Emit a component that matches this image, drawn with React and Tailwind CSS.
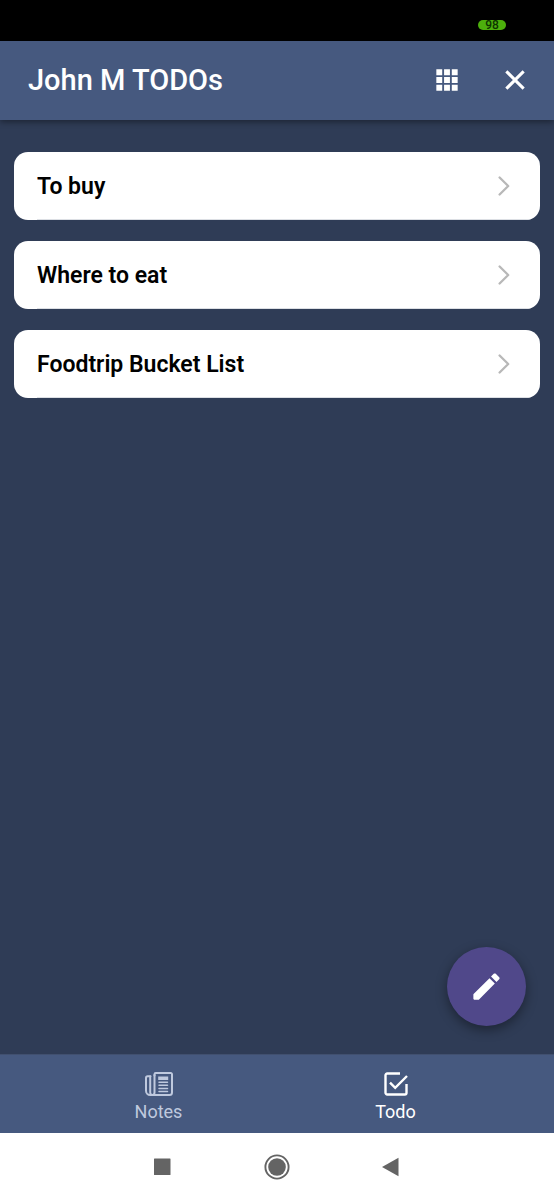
import React, { useState } from 'react';

const lists = ['To buy', 'Where to eat', 'Foodtrip Bucket List'];

function AppsIcon() {
  return (
    <svg viewBox="0 0 24 24" className="w-8 h-8" fill="currentColor" aria-hidden="true">
      <path d="M4 4h4.4v4.4H4zM9.8 4h4.4v4.4H9.8zM15.6 4H20v4.4h-4.4zM4 9.8h4.4v4.4H4zM9.8 9.8h4.4v4.4H9.8zM15.6 9.8H20v4.4h-4.4zM4 15.6h4.4V20H4zM9.8 15.6h4.4V20H9.8zM15.6 15.6H20V20h-4.4z" />
    </svg>
  );
}

function CloseIcon() {
  return (
    <svg viewBox="0 0 24 24" className="w-8 h-8" fill="currentColor" aria-hidden="true">
      <path d="M19.3 6.3L17.7 4.7 12 10.4 6.3 4.7 4.7 6.3 10.4 12l-5.7 5.7 1.6 1.6 5.7-5.7 5.7 5.7 1.6-1.6L13.6 12z" />
    </svg>
  );
}

function ChevronIcon() {
  return (
    <svg viewBox="0 0 12 20" className="w-3 h-5 text-[#b8b8b8]" fill="none" stroke="currentColor" strokeWidth="2.3" strokeLinecap="round" strokeLinejoin="round" aria-hidden="true">
      <path d="M1.6 1.5l8.6 8.5-8.6 8.5" />
    </svg>
  );
}

function PencilIcon() {
  return (
    <svg viewBox="0 0 512 512" className="w-[35px] h-[35px]" fill="currentColor" aria-hidden="true">
      <path d="M64 372v64c0 7 5 12 12 12h64q4 0 7-3L378 212l-78-78L67 365q-3 3-3 7zM441.6 150.4c8.5-8.5 8.5-21.3 0-29.9l-50.1-50.1c-8.5-8.5-21.3-8.5-29.9 0l-39.5 39.5 80 80 39.5-39.5z" />
    </svg>
  );
}

function NewspaperIcon() {
  return (
    <svg viewBox="0 0 28 24" className="w-7 h-6" fill="none" stroke="currentColor" strokeWidth="2" strokeLinecap="round" strokeLinejoin="round" aria-hidden="true">
      <path d="M9.5 3.5V2.2A1.2 1.2 0 0 1 10.7 1h15.1A1.2 1.2 0 0 1 27 2.2v18.3a2.5 2.5 0 0 1-2.5 2.5H5.2A4.2 4.2 0 0 1 1 18.8V6a1.7 1.7 0 0 1 1.7-1.7h2.8" />
      <path d="M9.5 3v17.5A2.5 2.5 0 0 1 7 23a2.5 2.5 0 0 1-1.8-2.5V4.5" />
      <path d="M14 10.2h8.5M14 13.3h8.500M14 16.400h8.500M14 19.400h8.500" strokeWidth="1.500" />
      <path d="M13.200 4.500h10v3.500h-10z" fill="currentColor" stroke="none" />
    </svg>
  );
}

function CheckboxIcon() {
  return (
    <svg viewBox="0 0 24 24" className="w-6 h-6" fill="none" stroke="currentColor" strokeWidth="2.4" strokeLinejoin="round" aria-hidden="true">
      <path d="M16 1.5H3.2A1.7 1.7 0 0 0 1.5 3.2v17.6a1.7 1.7 0 0 0 1.7 1.7h17.6a1.7 1.7 0 0 0 1.7-1.7V12" />
      <path d="M6 10.7l5.2 5.2L23 4" strokeLinejoin="miter" />
    </svg>
  );
}

const tabs = [
  { id: 'notes', label: 'Notes', Icon: NewspaperIcon },
  { id: 'todo', label: 'Todo', Icon: CheckboxIcon },
];

export default function App() {
  const [activeTab, setActiveTab] = useState('todo');

  return (
    <div className="min-h-screen flex flex-col bg-[#2f3c56] font-['Roboto',sans-serif]">
      <div className="h-[41px] shrink-0 bg-black flex justify-end items-center pt-2 pr-12">
        <span className="w-7 h-[10px] rounded-full bg-[#4caf0c] text-[#0b3300] text-[12px] leading-[10px] font-medium text-center">98</span>
      </div>

      <header className="relative h-[79px] shrink-0 bg-[#46597f] text-white flex items-center justify-between pl-7 pr-[23px] pb-px shadow-[0_2px_6px_rgba(0,0,0,0.4)]">
        <h1 className="text-[29px] leading-9 font-medium">John M TODOs</h1>
        <div className="flex items-center gap-9">
          <button type="button" aria-label="Apps"><AppsIcon /></button>
          <button type="button" aria-label="Close"><CloseIcon /></button>
        </div>
      </header>

      <main className="flex-1 flex flex-col px-[14px] pt-8">
        <ul className="flex flex-col gap-[21px]">
          {lists.map((name) => (
            <li key={name}>
              <button type="button" className="w-full h-[68px] bg-white rounded-[14px] pl-[23px] flex text-left overflow-hidden">
                <span className="flex-1 h-full flex items-center justify-between pr-[30px] border-b border-[#dcdfe4]">
                  <span className="pt-0.5 text-[23px] leading-8 font-semibold text-black">{name}</span>
                  <ChevronIcon />
                </span>
              </button>
            </li>
          ))}
        </ul>
        <button type="button" aria-label="New list" className="mt-auto mb-7 mr-[14px] self-end w-[79px] h-[79px] rounded-full bg-[#50488a] text-white flex items-center justify-center shadow-[0_4px_12px_rgba(0,0,0,0.4)]">
          <PencilIcon />
        </button>
      </main>

      <nav className="h-[79px] shrink-0 bg-[#46597f] border-t border-[#41506f] flex px-10">
        {tabs.map(({ id, label, Icon }) => (
          <button
            key={id}
            type="button"
            onClick={() => setActiveTab(id)}
            className={`flex-1 flex flex-col items-center justify-center gap-1 pt-2 ${activeTab === id ? 'text-white' : 'text-[#bfc9de]'}`}
          >
            <Icon />
            <span className="text-[18px] leading-6">{label}</span>
          </button>
        ))}
      </nav>

      <div className="h-[67px] shrink-0 bg-white text-[#646464] flex items-center justify-center gap-[88px]">
        <button type="button" aria-label="Recent apps">
          <svg viewBox="0 0 26 26" className="w-[26px] h-[26px]" fill="currentColor"><rect x="4" y="4.5" width="16.5" height="16.5" rx="0.5" /></svg>
        </button>
        <button type="button" aria-label="Home">
          <svg viewBox="0 0 26 26" className="w-[26px] h-[26px]" fill="currentColor">
            <circle cx="13" cy="13" r="11.6" fill="none" stroke="currentColor" strokeWidth="1.9" />
            <circle cx="13" cy="13" r="8.8" />
          </svg>
        </button>
        <button type="button" aria-label="Back">
          <svg viewBox="0 0 26 26" className="w-[26px] h-[26px]" fill="currentColor"><path d="M4 13L20.5 3.7v18.6z" /></svg>
        </button>
      </div>
    </div>
  );
}
